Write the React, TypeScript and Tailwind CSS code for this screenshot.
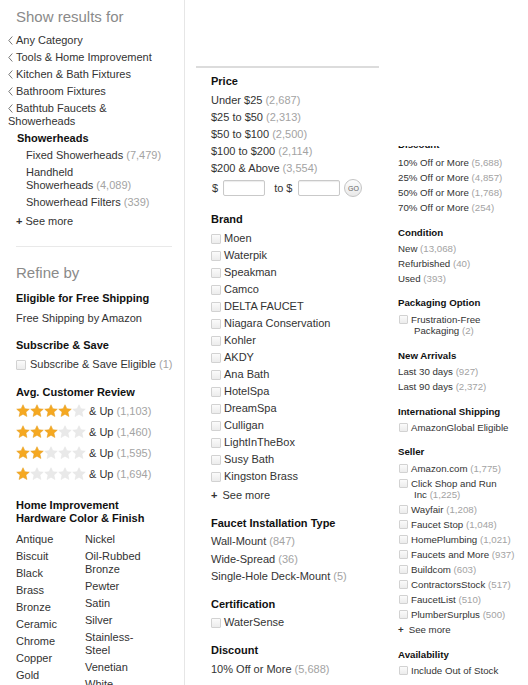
import React from "react"

const categories = [
  "Any Category",
  "Tools & Home Improvement",
  "Kitchen & Bath Fixtures",
  "Bathroom Fixtures",
]

const leftColors = ["Antique", "Biscuit", "Black", "Brass", "Bronze", "Ceramic", "Chrome", "Copper", "Gold"]
const rightColors: React.ReactNode[] = [
  "Nickel",
  <>Oil-Rubbed<br />Bronze</>,
  "Pewter",
  "Satin",
  "Silver",
  <>Stainless-<br />Steel</>,
  "Venetian",
  "White",
]

const prices: [string, string][] = [
  ["Under $25", "(2,687)"],
  ["$25 to $50", "(2,313)"],
  ["$50 to $100", "(2,500)"],
  ["$100 to $200", "(2,114)"],
  ["$200 & Above", "(3,554)"],
]

const brands = [
  "Moen", "Waterpik", "Speakman", "Camco", "DELTA FAUCET", "Niagara Conservation", "Kohler",
  "AKDY", "Ana Bath", "HotelSpa", "DreamSpa", "Culligan", "LightInTheBox", "Susy Bath", "Kingston Brass",
]

const reviews: [number, string][] = [
  [4, "(1,103)"],
  [3, "(1,460)"],
  [2, "(1,595)"],
  [1, "(1,694)"],
]

const discounts: [string, string][] = [
  ["10% Off or More", "(5,688)"],
  ["25% Off or More", "(4,857)"],
  ["50% Off or More", "(1,768)"],
  ["70% Off or More", "(254)"],
]

const sellers: [React.ReactNode, string][] = [
  ["Wayfair", "(1,208)"],
  ["Faucet Stop", "(1,048)"],
  ["HomePlumbing", "(1,021)"],
  ["Faucets and More", "(937)"],
  ["Buildcom", "(603)"],
  ["ContractorsStock", "(517)"],
  ["FaucetList", "(510)"],
  ["PlumberSurplus", "(500)"],
]

function Count({ n }: { n: string }) {
  return <span className="text-[#a3a3a3]">{n}</span>
}

function Box({ small }: { small?: boolean }) {
  return (
    <span
      className={
        small
          ? "inline-block shrink-0 w-[9px] h-[9px] border border-[#d2d2d2] bg-gradient-to-b from-[#fbfbfb] to-[#ececec] rounded-[1px]"
          : "inline-block shrink-0 w-[10px] h-[10px] border border-[#d2d2d2] bg-gradient-to-b from-[#fbfbfb] to-[#ececec] rounded-[1px]"
      }
    />
  )
}

function Chevron() {
  return (
    <svg width="5" height="9" viewBox="0 0 5 9" className="inline-block align-[-1px] mr-[3px]">
      <polyline points="4.3,0.5 0.8,4.5 4.3,8.5" fill="none" stroke="#666" strokeWidth="0.9" />
    </svg>
  )
}

function Star({ on }: { on: boolean }) {
  return (
    <svg width="14" height="14" viewBox="0 0 24 24" className="block">
      <polygon
        points="12,1.2 15.2,8 22.8,8.8 17.1,13.9 18.7,21.5 12,17.6 5.3,21.5 6.9,13.9 1.2,8.8 8.8,8"
        fill={on ? "#f5a821" : "#e9e9e9"}
        stroke={on ? "#e39a16" : "#e2e2e2"}
        strokeWidth="0.8"
      />
    </svg>
  )
}

export default function App() {
  return (
    <div className="w-[528px] h-[685px] overflow-hidden bg-white flex font-['Liberation_Sans',Arial,sans-serif] text-[#333]">
      {/* LEFT: categories + refine */}
      <div className="w-[185px] shrink-0 border-r border-[#e6e6e6] pt-[7px] text-[11px] leading-[13px]">
        <div className="pl-[16px] text-[15px] leading-[20px] text-[#8a8a8a]">Show results for</div>

        <div className="mt-[7px] flex flex-col gap-[4px]">
          {categories.map((c) => (
            <div key={c} className="pl-[8px]">
              <Chevron />
              {c}
            </div>
          ))}
          <div className="pl-[8px]">
            <Chevron />
            Bathtub Faucets &amp;
            <br />
            Showerheads
          </div>
          <div className="pl-[17px] font-bold text-[#111]">Showerheads</div>
          <div className="pl-[26px]">
            Fixed Showerheads <Count n="(7,479)" />
          </div>
          <div className="pl-[26px]">
            Handheld
            <br />
            Showerheads <Count n="(4,089)" />
          </div>
          <div className="pl-[26px]">
            Showerhead Filters <Count n="(339)" />
          </div>
        </div>
        <div className="mt-[6px] pl-[16px]">
          <span className="mr-[3px] font-bold">+</span>See more
        </div>

        <div className="mt-[18px] ml-[16px] w-[156px] h-px bg-[#e9e9e9]" />

        <div className="pl-[16px]">
          <div className="mt-[16px] text-[15px] leading-[20px] text-[#8a8a8a]">Refine by</div>

          <div className="mt-[9px] font-bold text-[#111]">Eligible for Free Shipping</div>
          <div className="mt-[7px]">Free Shipping by Amazon</div>

          <div className="mt-[14px] font-bold text-[#111]">Subscribe &amp; Save</div>
          <div className="mt-[6px] flex items-center gap-[4px] h-[13px]">
            <Box />
            <span>
              Subscribe &amp; Save Eligible <Count n="(1)" />
            </span>
          </div>

          <div className="mt-[15px] font-bold text-[#111]">Avg. Customer Review</div>
          <div className="mt-[5px] flex flex-col gap-[7px]">
            {reviews.map(([n, c]) => (
              <div key={c} className="flex items-center h-[14px]">
                {[1, 2, 3, 4, 5].map((i) => (
                  <Star key={i} on={i <= n} />
                ))}
                <span className="ml-[3px]">
                  &amp; Up <Count n={c} />
                </span>
              </div>
            ))}
          </div>

          <div className="mt-[18px] font-bold text-[#111]">
            Home Improvement
            <br />
            Hardware Color &amp; Finish
          </div>
          <div className="mt-[8px] grid grid-cols-[69px_1fr]">
            <div className="flex flex-col gap-[4px]">
              {leftColors.map((c) => (
                <div key={c}>{c}</div>
              ))}
            </div>
            <div className="flex flex-col gap-[4px]">
              {rightColors.map((c, i) => (
                <div key={i}>{c}</div>
              ))}
            </div>
          </div>
        </div>
      </div>

      {/* MIDDLE: price / brand */}
      <div className="w-[195px] shrink-0 text-[11px] leading-[13px]">
        <div className="mt-[66px] ml-[11px] w-[183px] h-[2px] bg-[#dcdcdc]" />
        <div className="pl-[26px]">
          <div className="mt-[7px] font-bold text-[#111]">Price</div>
          <div className="mt-[6px] flex flex-col gap-[4px]">
            {prices.map(([p, c]) => (
              <div key={p}>
                {p} <Count n={c} />
              </div>
            ))}
          </div>
          <div className="mt-[5px] h-[16px] flex items-center">
            <span className="ml-[1px]">$</span>
            <span className="ml-[5px] w-[42px] h-[16px] border border-[#c9c9c9] rounded-[2px] bg-white shadow-[inset_0_1px_1px_rgba(0,0,0,0.08)]" />
            <span className="ml-[9px]">to $</span>
            <span className="ml-[6px] w-[42px] h-[16px] border border-[#c9c9c9] rounded-[2px] bg-white shadow-[inset_0_1px_1px_rgba(0,0,0,0.08)]" />
            <span className="ml-[4px] w-[18px] h-[18px] rounded-full border border-[#c4c4c4] bg-gradient-to-b from-[#fdfdfd] to-[#e9e9e9] flex items-center justify-center text-[7px] leading-none text-[#666]">
              GO
            </span>
          </div>

          <div className="mt-[17px] font-bold text-[#111]">Brand</div>
          <div className="mt-[6px] flex flex-col gap-[4px]">
            {brands.map((b) => (
              <div key={b} className="flex items-center gap-[3px] h-[13px]">
                <Box />
                <span>{b}</span>
              </div>
            ))}
          </div>
          <div className="mt-[6px]">
            <span className="mr-[5px] font-bold">+</span>See more
          </div>

          <div className="mt-[15px] font-bold text-[#111]">Faucet Installation Type</div>
          <div className="mt-[5px] flex flex-col gap-[4.5px]">
            <div>
              Wall-Mount <Count n="(847)" />
            </div>
            <div>
              Wide-Spread <Count n="(36)" />
            </div>
            <div>
              Single-Hole Deck-Mount <Count n="(5)" />
            </div>
          </div>

          <div className="mt-[15px] font-bold text-[#111]">Certification</div>
          <div className="mt-[5px] flex items-center gap-[3px] h-[13px]">
            <Box />
            <span>WaterSense</span>
          </div>

          <div className="mt-[15px] font-bold text-[#111]">Discount</div>
          <div className="mt-[6px]">
            10% Off or More <Count n="(5,688)" />
          </div>
        </div>
      </div>

      {/* RIGHT: discount / condition / seller */}
      <div className="flex-1 pl-[18px] text-[9.7px] leading-[11px] whitespace-nowrap">
        <div className="mt-[146px] h-[2px] overflow-hidden">
          <div className="-mt-[7px] font-bold text-[#111]">Discount</div>
        </div>
        <div className="mt-[9px] flex flex-col gap-[4px]">
          {discounts.map(([d, c]) => (
            <div key={d}>
              {d} <Count n={c} />
            </div>
          ))}
        </div>

        <div className="mt-[14px] font-bold text-[#111]">Condition</div>
        <div className="mt-[5px] flex flex-col gap-[4px]">
          <div>
            New <Count n="(13,068)" />
          </div>
          <div>
            Refurbished <Count n="(40)" />
          </div>
          <div>
            Used <Count n="(393)" />
          </div>
        </div>

        <div className="mt-[13px] font-bold text-[#111]">Packaging Option</div>
        <div className="mt-[6px] flex items-start gap-[3px] pl-[1px]">
          <span className="mt-[1px]">
            <Box small />
          </span>
          <span>
            Frustration-Free
            <br />
            <span className="pl-[3px]">
              Packaging <Count n="(2)" />
            </span>
          </span>
        </div>

        <div className="mt-[14px] font-bold text-[#111]">New Arrivals</div>
        <div className="mt-[5px] flex flex-col gap-[4px]">
          <div>
            Last 30 days <Count n="(927)" />
          </div>
          <div>
            Last 90 days <Count n="(2,372)" />
          </div>
        </div>

        <div className="mt-[14px] font-bold text-[#111]">International Shipping</div>
        <div className="mt-[5px] flex items-center gap-[3px] pl-[1px] h-[11px]">
          <Box small />
          <span>AmazonGlobal Eligible</span>
        </div>

        <div className="mt-[13px] font-bold text-[#111]">Seller</div>
        <div className="mt-[6px] flex flex-col gap-[4px]">
          <div className="flex items-center gap-[3px] pl-[1px] h-[11px]">
            <Box small />
            <span>
              Amazon.com <Count n="(1,775)" />
            </span>
          </div>
          <div className="flex items-start gap-[3px] pl-[1px]">
            <span className="mt-[1px]">
              <Box small />
            </span>
            <span>
              Click Shop and Run
              <br />
              <span className="pl-[3px]">
                Inc <Count n="(1,225)" />
              </span>
            </span>
          </div>
          {sellers.map(([s, c], i) => (
            <div key={i} className="flex items-center gap-[3px] pl-[1px] h-[11px]">
              <Box small />
              <span>
                {s} <Count n={c} />
              </span>
            </div>
          ))}
          <div>
            <span className="mr-[5px] font-bold">+</span>See more
          </div>
        </div>

        <div className="mt-[14px] font-bold text-[#111]">Availability</div>
        <div className="mt-[5px] flex items-center gap-[3px] pl-[1px] h-[11px]">
          <Box small />
          <span>Include Out of Stock</span>
        </div>
      </div>
    </div>
  )
}
